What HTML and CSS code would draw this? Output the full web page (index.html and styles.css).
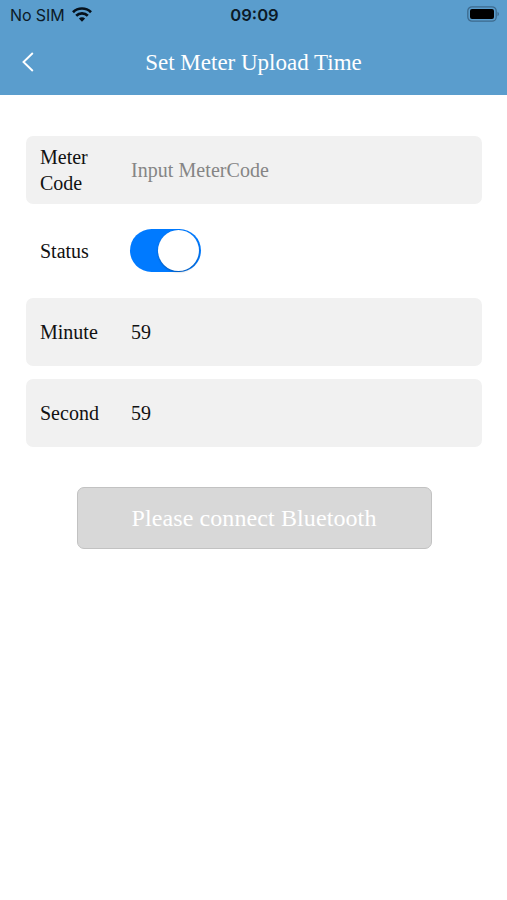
FILE: index.html
```html
<!DOCTYPE html>
<html lang="en">
<head>
<meta charset="utf-8">
<title>Set Meter Upload Time</title>
<link rel="stylesheet" href="styles.css">
</head>
<body>
<header class="top">
  <div class="status">
    <div class="carrier"><span>No SIM</span>
      <svg class="wifi" width="20" height="15" viewBox="0 0 20 15"><g fill="none" stroke="#06111b" stroke-width="2.7"><path d="M1 5.2a12.8 12.8 0 0 1 18 0"/><path d="M4.2 8.7a8.2 8.2 0 0 1 11.6 0"/></g><path d="M10 14.7 6.9 11.6a4.4 4.4 0 0 1 6.2 0z" fill="#06111b"/></svg>
    </div>
    <span class="clock">09:09</span>
    <svg class="battery" width="32" height="16" viewBox="0 0 32 16"><rect x=".8" y=".8" width="28.4" height="14.4" rx="4.2" fill="none" stroke="#3d6a8d" stroke-width="1.3"/><rect x="3" y="3" width="24" height="10" rx="2" fill="#000"/><path d="M30.5 5.7q1.5.7 1.5 2.3t-1.5 2.3z" fill="#3d6a8d"/></svg>
  </div>
  <div class="nav">
    <svg class="back" width="12" height="20" viewBox="0 0 12 20"><path d="M10.8 1 1.5 10l9.3 9" fill="none" stroke="#fff" stroke-width="1.9"/></svg>
    <h1>Set Meter Upload Time</h1>
  </div>
</header>
<main class="form">
  <label class="row filled code"><span class="name">Meter Code</span><span class="value hint">Input MeterCode</span></label>
  <div class="row state"><span class="name">Status</span><span class="switch"><span class="knob"></span></span></div>
  <label class="row filled"><span class="name">Minute</span><span class="value">59</span></label>
  <label class="row filled second"><span class="name">Second</span><span class="value">59</span></label>
  <button class="connect">Please connect Bluetooth</button>
</main>
</body>
</html>
```
FILE: styles.css
```css
* { box-sizing: border-box; }
body { margin: 0; min-height: 900px; background: #fff; color: #111; font-family: "Liberation Serif", serif; font-size: 20px; }
.top { height: 95px; background: #5a9dcd; }
.status { height: 30px; padding: 0 8px 0 10px; display: grid; grid-template-columns: 1fr auto 1fr; align-items: center; font: 16.6px/30px Inter, sans-serif; color: #0c1a27; }
.carrier { display: flex; align-items: center; gap: 7px; font-size: 16px; letter-spacing: -.1px; }
.wifi { margin-top: -1px; }
.clock { font-weight: 600; }
.battery { justify-self: end; margin-top: -2px; }
.nav { height: 64px; padding: 0 22px; display: grid; grid-template-columns: 12px 1fr 12px; align-items: center; }
h1 { margin: 1px 0 0; color: #fff; text-align: center; font-size: 23px; line-height: 27px; font-weight: 400; white-space: nowrap; }
.form { padding: 41px 25px 0 26px; display: flex; flex-direction: column; }
.row { height: 68px; padding: 0 14px; display: grid; grid-template-columns: 91px 1fr; align-items: center; }
.filled { background: #f1f1f1; border-radius: 7px; }
.name { line-height: 26px; padding-right: 25px; }
.value { letter-spacing: .05px; }
.hint { color: #858585; }
.state { height: 94px; }
.second { margin-top: 13px; }
.switch { width: 71px; height: 43px; margin: -1px 0 0 -1px; padding: 1px 2px 1px 1px; border-radius: 22px; background: #007aff; display: flex; justify-content: flex-end; }
.knob { width: 41px; height: 41px; border-radius: 50%; background: #fff; box-shadow: 0 1px 2px rgba(0, 0, 0, .3); }
.connect { width: 355px; height: 62px; margin: 40px 0 0 51px; border: 1px solid #c2c2c2; border-radius: 7px; background: #d8d8d8; color: #fff; font: 24px "Liberation Serif", serif; letter-spacing: .1px; padding: 0 1px 0 0; }
```
